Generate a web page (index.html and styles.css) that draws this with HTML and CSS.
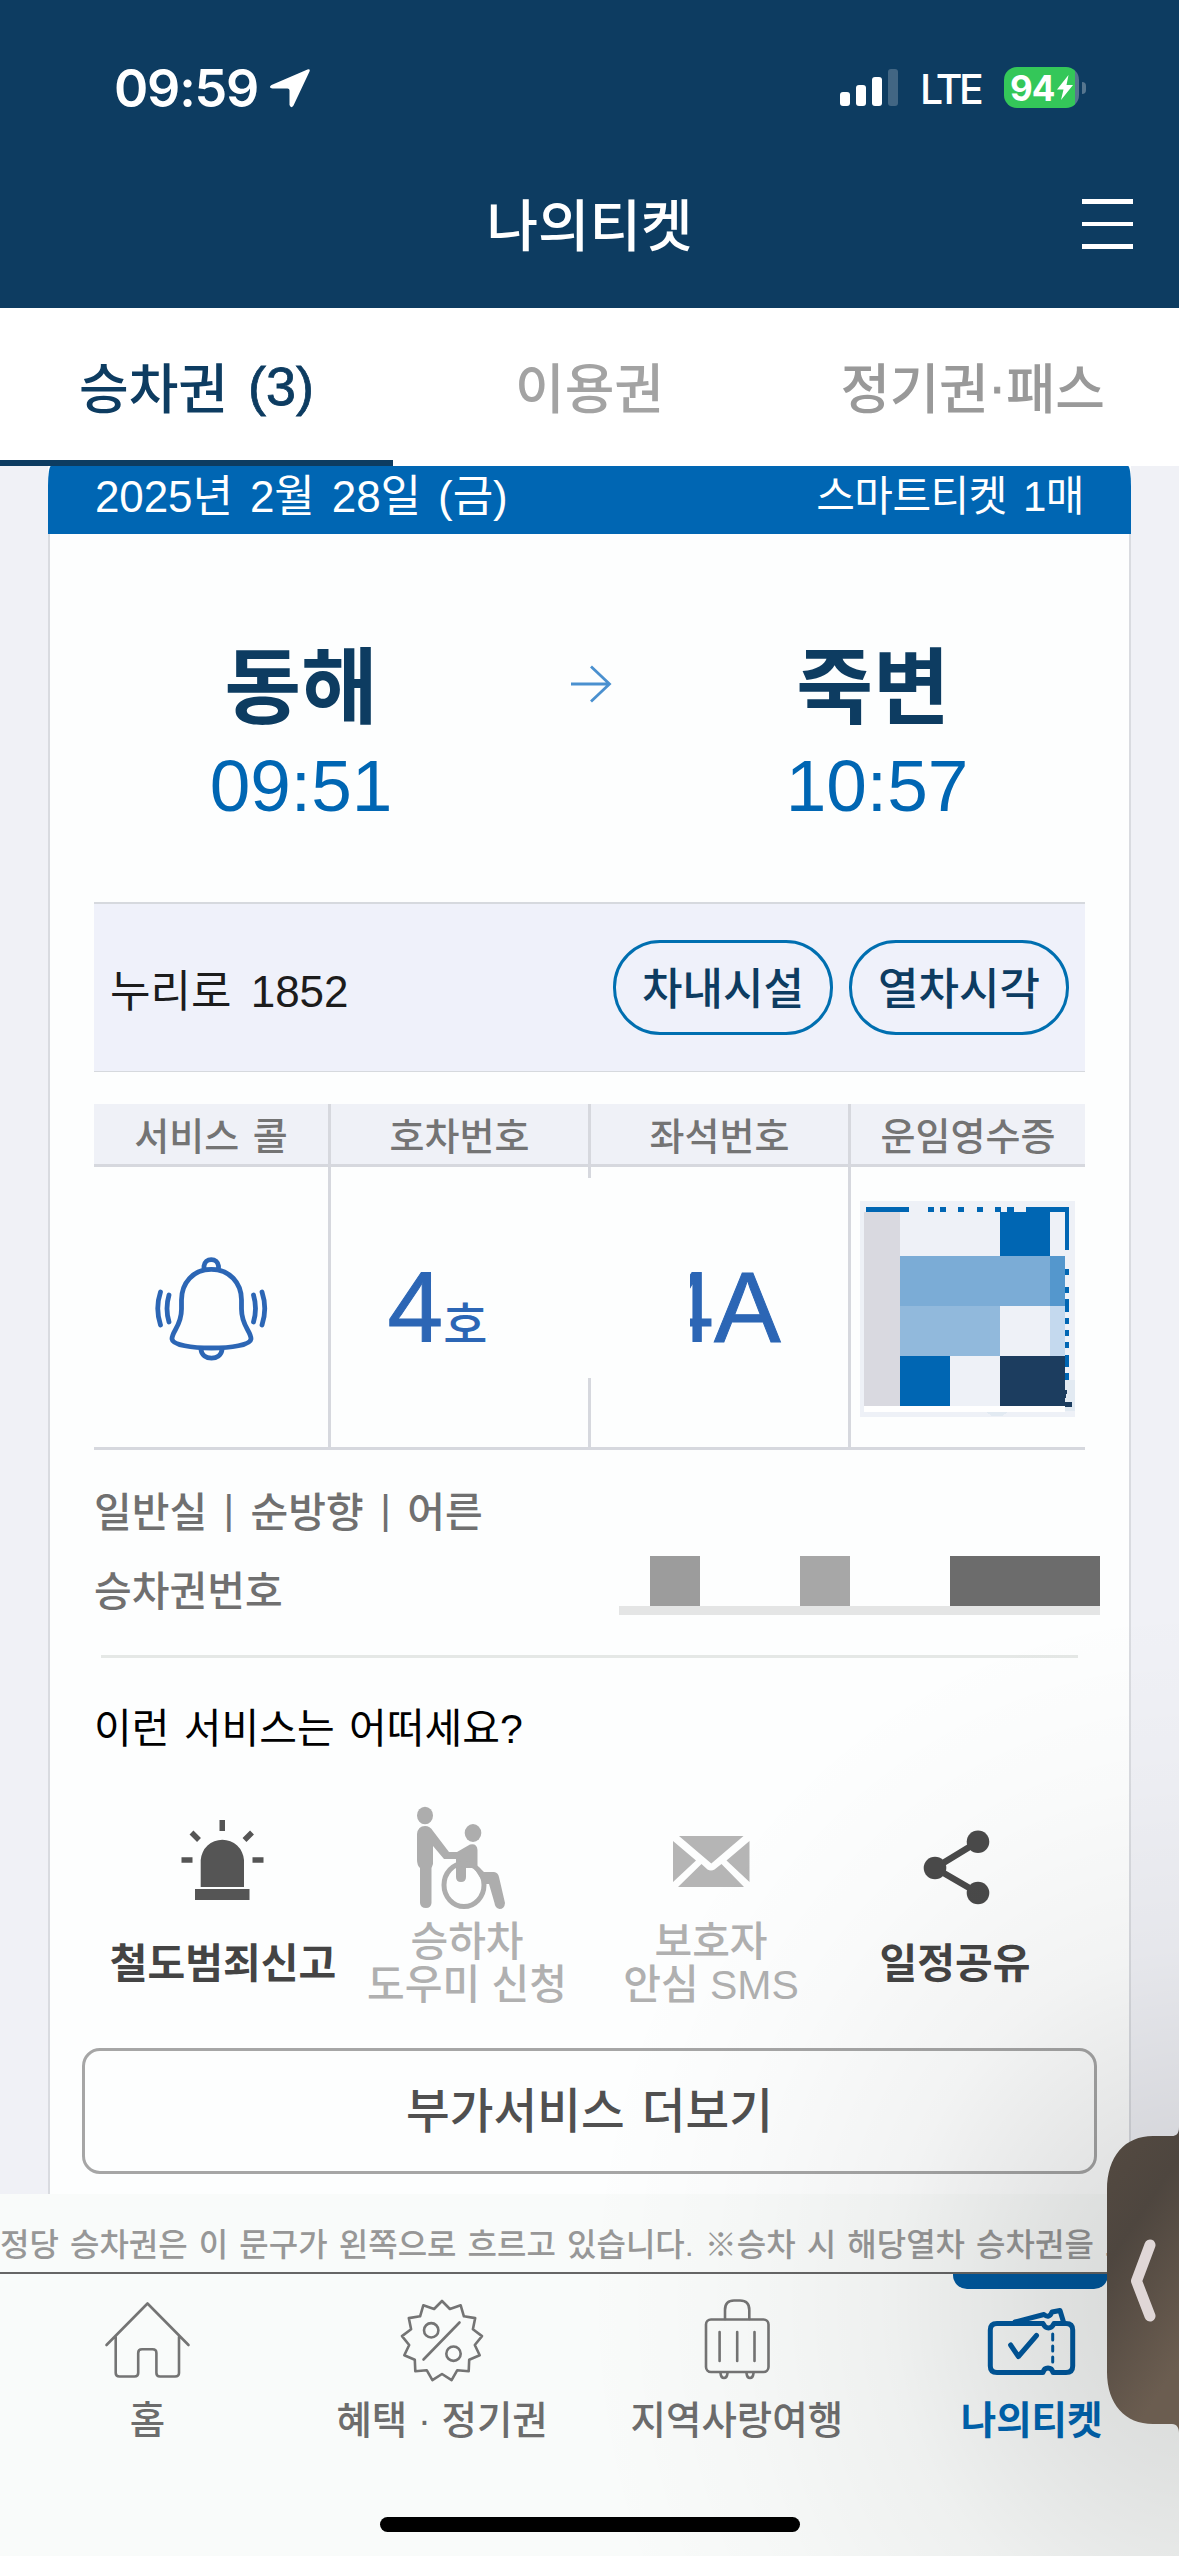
FILE: index.html
```html
<!DOCTYPE html>
<html lang="ko">
<head>
<meta charset="utf-8">
<title>나의티켓</title>
<link rel="stylesheet" href="styles.css">
</head>
<body>
<div class="screen">
  <header class="top">
    <div class="status">
      <span class="clock">09:59</span>
      <svg class="loc" viewBox="0 0 42 40" width="42" height="40"><path d="M38.500 1.500Q41.500 .5 40.500 3.500L24.500 37.500Q22 41 20.500 37V22.500Q20.500 20.500 18.500 20.500H3.500Q-1 19.500 2.500 17Z" fill="#fff"/></svg>
      <svg class="signal" viewBox="0 0 58 38" width="58" height="38" fill="#fff"><rect x="0" y="23" width="10" height="14" rx="3"/><rect x="16" y="16" width="10" height="21" rx="3"/><rect x="32" y="8" width="10" height="29" rx="3"/><rect x="48" y="0" width="10" height="37" rx="3" opacity=".22"/></svg>
      <span class="lte">LTE</span>
      <span class="battery"><span class="pct">94</span><svg viewBox="0 0 16 25" width="16" height="25"><path d="M11.500 0L0 14.500H6.500L4 25L16 10H9.500Z" fill="#fff"/></svg></span>
      <span class="nub"></span>
    </div>
    <div class="titlebar">
      <h1>나의티켓</h1>
      <div class="menu"><i></i><i></i><i></i></div>
    </div>
  </header>
  <nav class="tabs">
    <span class="tab on">승차권 <span class="raise">(3)</span></span>
    <span class="tab">이용권</span>
    <span class="tab pass">정기권<span class="raise">·</span>패스</span>
  </nav>
  <main class="scroll">
    <article class="card">
      <div class="datebar"><span>2025년 2월 28일 (금)</span><span>스마트티켓 1매</span></div>
      <div class="body">
        <section class="route">
          <div class="stop"><b>동해</b><span>09:51</span></div>
          <svg class="arrow" viewBox="0 0 42 38" width="42" height="38" fill="none" stroke="#4a90cf" stroke-width="2.800"><path d="M1 19H40M21 1.500L39.500 19L21 36.500"/></svg>
          <div class="stop"><b>죽변</b><span class="arrive">10:57</span></div>
        </section>
        <section class="train">
          <span class="name">누리로 1852</span>
          <span class="pill">차내시설</span>
          <span class="pill">열차시각</span>
        </section>
        <section class="seat">
          <div class="th">서비스 콜</div><div class="th">호차번호</div><div class="th">좌석번호</div><div class="th">운임영수증</div>
          <div class="td">
            <svg class="bell" viewBox="150 1250 123 114" width="123" height="114" fill="none" stroke="#2c66b5" stroke-width="4.800" stroke-linecap="round"><path d="M204 1268V1266A7.300 7.300 0 0 1 218.500 1266V1268"/><path d="M211.300 1269.300C193 1269.300 181.500 1283 181.500 1300V1309C181.500 1326 172 1331 172 1339C173 1351 250 1351 251 1339C251 1331 241.500 1326 241.500 1309V1300C241.500 1283 229.500 1269.300 211.300 1269.300Z"/><path d="M201 1349.500C202 1361 221 1361 222 1349.500"/><path d="M169 1295Q165 1308.500 169 1322M160.500 1292Q155 1308.500 160.500 1325M253.500 1295Q257.500 1308.500 253.500 1322M262 1292Q267.500 1308.500 262 1325"/></svg>
          </div>
          <div class="td num"><span>4<small>호차</small></span></div>
          <div class="td num"><span>4A</span></div>
          <div class="td">
            <svg class="receipt" viewBox="860 1201 215 216" width="215" height="216" shape-rendering="crispEdges"><rect x="860" y="1201" width="215" height="216" fill="#eef1f7"/>
              <path fill="#0066b3" d="M866 1207h43v5h-43zM928 1207h6v5h-6zM940 1207h6v5h-6zM958 1207h6v5h-6zM977 1207h6v5h-6zM995 1207h6v5h-6zM1007 1207h7v5h-7zM1026 1207h43v43h-4v-38h-39zM1065 1269h4v6h-4zM1065 1287h4v6h-4zM1065 1299h4v13h-4zM1065 1318h4v6h-4zM1065 1330h4v6h-4zM1065 1342h4v6h-4zM1065 1355h4v12h-4zM1065 1373h4v7h-4zM1000 1212h50v44h-50zM900 1356h50v50h-50z"/>
              <path fill="#d9d9e0" d="M864 1212h36v194h-36z"/><path fill="#7bacd6" d="M900 1256h150v50h-150z"/><path fill="#5497cd" d="M1050 1256h15v50h-15z"/><path fill="#91b9dc" d="M900 1306h100v50h-100z"/><path fill="#c4d9ee" d="M1050 1306h15v50h-15z"/>
              <path fill="#fff" d="M864 1406h201v6h-201z"/><path fill="#e2eaf2" d="M1065 1380h10v31h-10zM986 1412h22l-6 4h-10z"/><path fill="#1c3d5f" d="M1000 1356h65v50h-65zM1065 1402h7v5h-7zM1065 1390h2l-1 8h-1z"/></svg>
          </div>
          <div class="mask"></div>
        </section>
        <p class="info">일반실 <span class="bar">|</span> 순방향 <span class="bar">|</span> 어른</p>
        <div class="info ticketno"><span>승차권번호</span>
          <svg class="redact" viewBox="619 1556 481 59" width="481" height="59" shape-rendering="crispEdges"><path fill="#9c9c9c" d="M650 1556h50v50h-50z"/><path fill="#a7a7a7" d="M800 1556h50v50h-50z"/><path fill="#6c6c6c" d="M950 1556h150v50h-150z"/><path fill="#e4e5e5" d="M619 1606h481v9h-481z"/></svg>
        </div>
        <hr>
        <h2>이런 서비스는 어떠세요?</h2>
        <section class="actions">
          <div class="act strong">
            <svg viewBox="173 1800 100 112" width="100" height="112" fill="#555"><path d="M200.700 1887V1860A21.700 21.700 0 0 1 244 1860V1887ZM195 1889H249.500V1900H195Z"/><path d="M219.500 1820h5.500v11h-5.500zM181.500 1857.300h11v5.500h-11zM252.500 1857.300h11v5.500h-11z"/><path d="M191.500 1832.500L199 1840M252 1832.500L244.500 1840" stroke="#555" stroke-width="5.500"/></svg>
            <span>철도범죄신고</span>
          </div>
          <div class="act">
            <svg viewBox="417 1800 100 112" width="100" height="112" fill="#adadad"><ellipse cx="425" cy="1815.500" rx="8" ry="8.700"/><path d="M417 1834Q418 1826 425 1826Q430 1826 433 1831L449 1852H457L470 1844.500Q477 1843 477.500 1850V1866L484 1872H494Q498 1872.500 499 1877L505 1903Q504.500 1909 499.500 1909Q495 1908 494.500 1903L489 1884H484L474 1868H466V1877Q466 1882 461 1882Q456 1882 456 1877V1859H444L433 1846V1864L431.500 1868V1903Q431 1908 426 1908Q420.500 1908 420 1903V1868Q417 1865 417 1860Z"/><ellipse cx="473" cy="1833" rx="8.300" ry="8.900"/><ellipse cx="464" cy="1885" rx="20" ry="21.500" fill="none" stroke="#adadad" stroke-width="5"/></svg>
            <span>승하차<br>도우미 신청</span>
          </div>
          <div class="act">
            <svg viewBox="661 1800 100 112" width="100" height="112" fill="#b5b5b5"><path d="M679 1836H743.500L711.300 1863.500ZM673 1841L696 1860.500L673 1882ZM749.500 1841L726.500 1860.500L749.500 1882ZM678 1887L701.500 1864L707.500 1869.500Q711 1871.500 714.500 1869.500L721.500 1864L744 1887Z"/></svg>
            <span>보호자<br>안심 SMS</span>
          </div>
          <div class="act strong">
            <svg viewBox="905 1800 100 112" width="100" height="112" fill="#4a4a4a"><path d="M978 1841.700L935 1868L978 1893" fill="none" stroke="#4a4a4a" stroke-width="6.500"/><circle cx="978" cy="1841.700" r="11.300"/><circle cx="935" cy="1868" r="11.300"/><circle cx="978" cy="1893" r="11.300"/></svg>
            <span>일정공유</span>
          </div>
        </section>
        <div class="more">부가서비스 더보기</div>
      </div>
    </article>
  </main>
  <div class="ticker">정당 승차권은 이 문구가 왼쪽으로 흐르고 있습니다. ※승차 시 해당열차 승차권을 소</div>
  <nav class="bottom">
    <div class="nav"><svg viewBox="97 2294 100 92" width="100" height="92"><path d="M106.500 2345L147.500 2303.500L188.500 2345M115.700 2337V2373Q115.700 2376.500 119.500 2376.500H134.500Q138.200 2376.500 138.200 2373V2353Q138.200 2349.300 142 2349.300H152.500Q156.400 2349.300 156.400 2353V2373Q156.400 2376.500 160 2376.500H175Q179 2376.500 179 2373V2337"/></svg><span>홈</span></div>
    <div class="nav"><svg viewBox="-50 -47 100 92" width="100" height="92"><path d="M0 -40L7.900 -32L18.700 -35.700L21.900 -24.700L33.200 -22.900L30.900 -11.700L40 -4.900L32.800 4L37.700 14.300L27.200 18.700L26.700 30.200L15.300 29.200L9.600 39.100L0 33L-9.600 39.100L-15.300 29.200L-26.700 30.200L-27.200 18.700L-37.700 14.300L-32.800 4L-40 -4.900L-30.900 -11.700L-33.200 -22.900L-21.900 -24.700L-18.700 -35.700L-7.900 -32ZM17.500 -18.500L-18.500 18.500"/><circle cx="-10.800" cy="-10.700" r="7.200"/><circle cx="11.500" cy="12.700" r="7.200"/></svg><span class="dot">혜택 · 정기권</span></div>
    <div class="nav"><svg viewBox="687 2294 100 92" width="100" height="92"><rect x="706" y="2319.500" width="62.500" height="52.500" rx="5"/><path d="M725 2319V2310Q725 2300.500 734 2300.500H740Q749.300 2300.500 749.300 2310V2319M719.600 2332V2361M737.200 2332V2361M754.500 2332V2361M720.500 2373Q721 2378 724 2378Q727 2378 727.500 2373M746.500 2373Q747 2378 750 2378Q753 2378 753.500 2373"/></svg><span>지역사랑여행</span></div>
    <div class="nav on"><svg viewBox="982 2294 100 92" width="100" height="92" class="ticket"><path d="M1043 2323.500H997Q990.300 2323.500 990.300 2330V2366Q990.300 2372.500 997 2372.500H1043Q1044 2368 1048 2368Q1052 2368 1053 2372.500H1066Q1072.700 2372.500 1072.700 2366V2330Q1072.700 2323.500 1066 2323.500H1054Q1052 2328 1048.500 2328Q1045 2328 1043 2323.500"/><path d="M1015 2322L1044 2314.500Q1049 2319 1052 2312L1060 2310.500L1063.500 2322M1010.600 2345L1018.400 2356.500L1036.500 2335.500"/><path d="M1052.700 2334V2340M1052.700 2346V2351M1052.700 2357V2362" stroke-width="3"/></svg><span>나의티켓</span></div>
    <div class="home"></div>
  </nav>
  <div class="shade"></div>
  <svg class="drawer" viewBox="1107 2126 72 310" width="72" height="310"><defs><linearGradient id="g" x1="0" y1="0" x2=".35" y2="1"><stop offset="0" stop-color="#544a41"/><stop offset=".4" stop-color="#4e463f"/><stop offset="1" stop-color="#6b5d50"/></linearGradient></defs><path fill="url(#g)" d="M1179 2127C1179 2134 1176 2136 1172 2136H1153C1125 2136 1107 2156 1107 2190V2372C1107 2404 1125 2424 1153 2424H1172C1177 2424 1179 2428 1179 2433Z"/><path d="M1150 2245L1136.500 2281L1150 2316" fill="none" stroke="#e0d7d7" stroke-width="11" stroke-linecap="round" stroke-linejoin="round"/></svg>
</div>
</body>
</html>
```
FILE: styles.css
```css
* { box-sizing: border-box; margin: 0; padding: 0; }
body { width: 1179px; height: 2556px; overflow: hidden; }
svg { display: block; flex: none; }
.screen {
  position: relative; width: 1179px; height: 2556px; overflow: hidden;
  display: flex; flex-direction: column; background: #f0f1f6; white-space: nowrap;
  font-family: "Liberation Sans", "Noto Sans CJK KR", sans-serif;
}
.top { height: 308px; background: #0d3c61; color: #fff; }
.status { height: 172px; padding: 3px 93px 0 114px; display: flex; align-items: center; font-family: Inter, sans-serif; }
.clock { font-size: 52px; font-weight: 600; letter-spacing: -1.2px; width: 155px; padding-top: 2px; }
.loc { margin-right: auto; }
.signal { margin-right: 22px; }
.lte { font-size: 41px; font-weight: 500; letter-spacing: -3.5px; width: 84px; padding-top: 2px; }
.battery { width: 75px; height: 41px; border-radius: 13px; display: flex; align-items: center; gap: 2px; padding-left: 6px; background: linear-gradient(90deg, #34c759 71px, #56768f 71px); }
.pct { font-size: 35px; font-weight: 700; letter-spacing: -1px; width: 45px; }
.nub { width: 4px; height: 12px; margin-left: 3px; border-radius: 0 4px 4px 0; background: #56768f; }
.titlebar { height: 136px; padding: 0 46px; display: grid; grid-template-columns: 51px 1fr 51px; }
h1 { grid-column: 2; text-align: center; font-size: 56px; font-weight: 500; line-height: 110px; }
.menu { padding-top: 27px; display: flex; flex-direction: column; gap: 18px; }
.menu i { height: 4.700px; background: #fff; }
.tabs { height: 158px; display: grid; grid-template-columns: repeat(3, 1fr); background: #fff; }
.tab { text-align: center; font-size: 54px; font-weight: 500; line-height: 164px; height: 158px; color: #a3a3a3; }
.tab.on { color: #0d3c61; word-spacing: 5px; border-bottom: 6px solid #0d3c61; }
.tab.pass { padding-right: 20px; color: #999; letter-spacing: -.4px; }
.raise { line-height: 0; vertical-align: 4px; -webkit-text-stroke: .8px currentColor; }
.scroll { height: 1728px; overflow: hidden; padding: 0 48px; }
.card { height: 1800px; background: #fdfefe; }
.datebar { height: 68px; padding: 0 47px; display: flex; justify-content: space-between; border-radius: 3px 3px 0 0 / 20px 20px 0 0; background: #0066b3; color: #fff; font-size: 44px; line-height: 62px; word-spacing: 5px; }
.datebar span { letter-spacing: -.1px; }
.datebar span + span { font-size: 42px; letter-spacing: -.5px; }
.body { height: 1732px; border: solid #d9dbe0; border-width: 0 2px; padding: 0 44px; }
.route { height: 368px; padding-top: 102px; display: grid; grid-template-columns: 414px 166px 398px; }
.stop { text-align: center; display: flex; flex-direction: column; line-height: 100px; }
.stop b { height: 100px; line-height: 105px; font-size: 83.500px; color: #0d3c61; }
.stop span { font-size: 73px; color: #0066b3; }
.stop .arrive { padding-left: 8px; }
.arrow { justify-self: center; margin-top: 29px; }
.train { height: 170px; border-top: 2px solid #d6d9de; border-bottom: 1px solid #d6d9de; background: #eff1fa; padding: 0 16px; display: flex; align-items: center; gap: 16px; font-size: 44px; color: #1c1c1c; }
.name { margin-right: auto; word-spacing: 7px; }
.pill { width: 220px; height: 95px; border: 3px solid #006fb0; border-radius: 47px; text-align: center; line-height: 93px; font-weight: 500; color: #0d3c61; }
.seat { position: relative; margin-top: 32px; display: grid; grid-template-columns: 237px 260px 260px 234px; }
.th { height: 63px; border-bottom: 3px solid #d6d8de; background: #eff1f7; text-align: center; font-size: 38px; font-weight: 500; line-height: 66px; color: #747474; word-spacing: 3px; }
.td { height: 283px; border-bottom: 3px solid #d6d8de; display: flex; align-items: center; justify-content: center; }
.th, .td { border-right: 3px solid #d6d8de; }
.th:nth-child(4), .td:nth-child(8) { border-right: 0; }
.bell { margin-top: 0; }
.num { font-size: 100px; color: #2c66b5; line-height: 280px; }
.num span { -webkit-text-stroke: 1px currentColor; }
.num small { font-size: 48px; font-weight: 500; line-height: 0; -webkit-text-stroke: 0; }
.receipt { margin: 4px 1px 0 0; }
.mask { position: absolute; left: 395px; top: 74px; width: 201px; height: 200px; background: #fdfefe; }
.info { margin-top: 33px; font-size: 41px; font-weight: 500; line-height: 61px; height: 60px; color: #707070; word-spacing: 5px; }
.bar { line-height: 0; vertical-align: 3px; }
.ticketno { margin-top: 19px; margin-right: -15px; display: flex; justify-content: space-between; }
.redact { margin-top: -6px; }
hr { margin: 33px 7px 0; height: 3px; border: 0; background: #e5e8e6; }
h2 { margin-top: 41px; font-size: 41px; font-weight: 400; line-height: 60px; color: #000; word-spacing: 3px; }
.actions { margin: 41px 7px 0; display: grid; grid-template-columns: repeat(4, 244px); }
.act { display: flex; flex-direction: column; align-items: center; gap: 8px; font-size: 41px; font-weight: 500; line-height: 43px; text-align: center; color: #b0b0b0; }
.act span { height: 86px; padding-top: 1px; }
.act.strong { color: #444; font-weight: 600; }
.act.strong span { line-height: 86px; }
.more { margin: 42px -12px 0; height: 126px; border: 3px solid #a6a6a6; border-radius: 18px; text-align: center; font-size: 47.500px; font-weight: 500; line-height: 122px; color: #505050; word-spacing: 4px; }
.ticker { height: 80px; padding-top: 21px; overflow: hidden; border-bottom: 2px solid #666; background: #f9fbfa; font-size: 32px; font-weight: 500; line-height: 60px; color: #979797; word-spacing: 2.2px; }
.bottom { position: relative; height: 282px; padding-top: 20px; display: grid; grid-template-columns: repeat(4, 1fr); background: #f9fbfa; }
.nav { display: flex; flex-direction: column; align-items: center; gap: 5px; font-size: 38.500px; font-weight: 500; line-height: 60px; color: #6c6c6c; }
.nav svg { fill: none; stroke: #747474; stroke-width: 2.600; stroke-linecap: round; stroke-linejoin: round; }
.nav.on { color: #0066b3; font-weight: 700; }
.nav .ticket { stroke: #00599f; stroke-width: 5; }
.nav.on::before { content: ""; position: absolute; top: 0; right: 71px; width: 155px; height: 15px; border-radius: 0 0 14px 14px; background: #00599f; }
.home { position: absolute; left: 380px; bottom: 24px; width: 420px; height: 15px; border-radius: 8px; background: #000; }
.shade { position: absolute; right: 0; bottom: 0; width: 700px; height: 956px; background: radial-gradient(620px 700px at 720px 700px, rgba(0,0,0,.15), rgba(0,0,0,.1) 25%, rgba(0,0,0,.045) 50%, rgba(0,0,0,.014) 75%, transparent); }
.drawer { position: absolute; right: 0; top: 2126px; }
```
